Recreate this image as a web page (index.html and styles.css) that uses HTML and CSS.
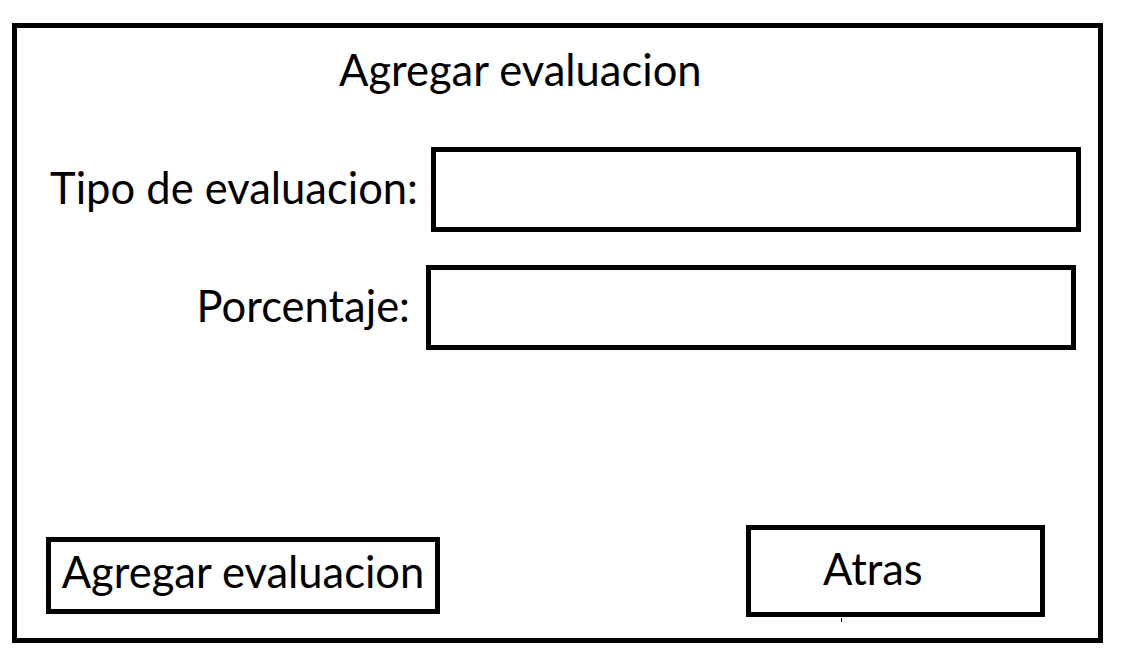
FILE: index.html
```html
<!DOCTYPE html>
<html lang="es">
<head>
<meta charset="utf-8">
<title>Agregar evaluacion</title>
<link rel="stylesheet" href="styles.css">
</head>
<body>
  <div class="frame">
    <h1 class="title">Agregar evaluacion</h1>
    <div class="row row-tipo">
      <label class="label" for="tipo">Tipo de evaluacion:</label>
      <div class="field" id="tipo"></div>
    </div>
    <div class="row row-porc">
      <label class="label" for="porc">Porcentaje:</label>
      <div class="field" id="porc"></div>
    </div>
    <div class="actions">
      <div class="btn btn-add">Agregar evaluacion</div>
      <div class="btn btn-back">Atras<span class="tick"></span></div>
    </div>
  </div>
</body>
</html>
```

FILE: styles.css
```css
html, body {
  margin: 0;
  padding: 0;
  background: #ffffff;
}

body {
  font-family: "Lato", "Open Sans", "Liberation Sans", sans-serif;
  color: #000000;
  width: 1122px;
  height: 661px;
  overflow: hidden;
}

.frame {
  box-sizing: border-box;
  margin: 23px 0 0 12px;
  width: 1091px;
  height: 620px;
  border: 5px solid #000;
  display: flex;
  flex-direction: column;
}

.title {
  margin: 16px 0 0 322px;
  font-size: 43.5px;
  font-weight: 400;
  line-height: 50px;
  height: 50px;
}

.row {
  display: flex;
  align-items: center;
}

.row-tipo {
  margin-top: 53px;
}

.row-porc {
  margin-top: 33px;
}

.label {
  box-sizing: border-box;
  font-size: 43.5px;
  line-height: 50px;
  text-align: right;
  white-space: nowrap;
  padding-bottom: 6px;
}

.row-tipo .label {
  width: 414px;
  padding-right: 13px;
}

.row-porc .label {
  width: 409px;
  padding-right: 16px;
}

.field {
  box-sizing: border-box;
  width: 650px;
  height: 85px;
  border: 5px solid #000;
}

.actions {
  display: flex;
  align-items: flex-start;
  margin-top: 175px;
}

.btn {
  box-sizing: border-box;
  border: 5px solid #000;
  font-size: 43.5px;
  line-height: 50px;
  white-space: nowrap;
  position: relative;
}

.btn-add {
  margin: 12px 0 0 29px;
  width: 394px;
  height: 77px;
  padding: 4px 0 0 0;
  text-align: center;
}

.btn-back {
  margin-left: 306px;
  width: 299px;
  height: 92px;
  padding: 13px 0 0 72px;
}

.tick {
  position: absolute;
  left: 90px;
  top: 88px;
  width: 1px;
  height: 4px;
  background: #000;
}
```
